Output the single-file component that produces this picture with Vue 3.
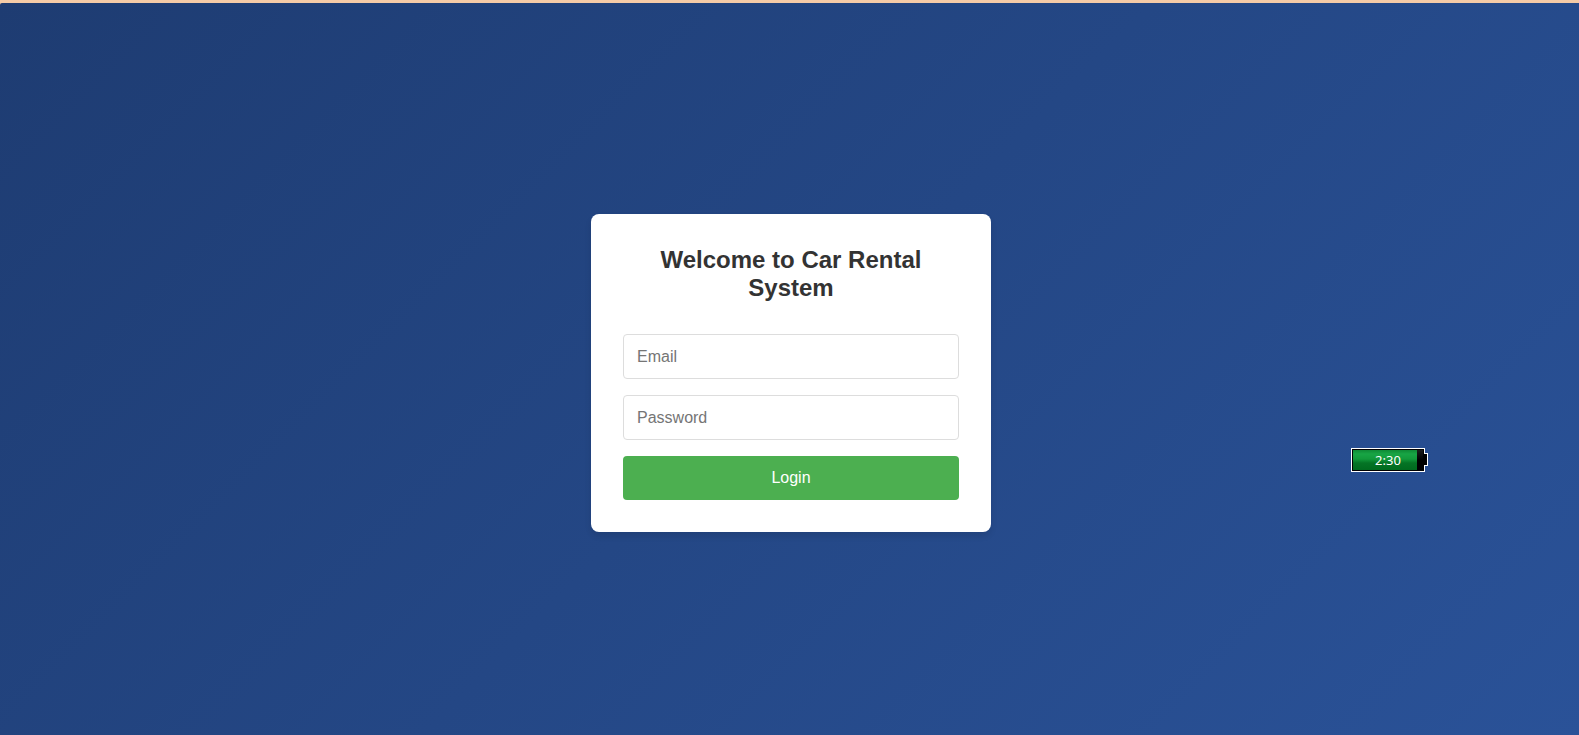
<script setup>
import { ref } from 'vue'

const email = ref('')
const password = ref('')
const remaining = '2:30'
</script>

<template>
  <div class="page">
    <div class="strip"></div>
    <main class="backdrop">
      <form class="card" @submit.prevent>
        <h1 class="title">Welcome to Car Rental System</h1>
        <input v-model="email" class="field" type="email" placeholder="Email" aria-label="Email" />
        <input v-model="password" class="field" type="password" placeholder="Password" aria-label="Password" />
        <button class="login" type="submit">Login</button>
      </form>
    </main>
    <div class="battery">
      <svg class="shell" width="77" height="24" viewBox="0 0 77 24" shape-rendering="crispEdges" aria-hidden="true">
        <defs>
          <linearGradient id="charge" x1="0" y1="0" x2="0" y2="1">
            <stop offset="0" stop-color="#0f8a35" />
            <stop offset="0.2" stop-color="#18a545" />
            <stop offset="0.45" stop-color="#129a3b" />
            <stop offset="0.65" stop-color="#047425" />
            <stop offset="1" stop-color="#006a1e" />
          </linearGradient>
          <linearGradient id="empty" x1="0" y1="0" x2="0" y2="1">
            <stop offset="0" stop-color="#1c1c1c" />
            <stop offset="0.5" stop-color="#000" />
          </linearGradient>
        </defs>
        <path d="M0 0H74V5H77V18H74V24H0Z" fill="#fff" />
        <path d="M1 1H73V6H76V17H73V23H1Z" fill="#000" />
        <rect x="66" y="2" width="6" height="20" fill="url(#empty)" />
        <rect x="2" y="2" width="64" height="20" fill="url(#charge)" />
      </svg>
      <span class="time">{{ remaining }}</span>
    </div>
  </div>
</template>

<style>
body {
  margin: 0;
}
</style>

<style scoped>
.page {
  position: relative;
  display: flex;
  flex-direction: column;
  min-height: 100vh;
  background: #f5cba7;
  font-family: "Liberation Sans", Arial, sans-serif;
}

.strip {
  height: 3px;
}

.backdrop {
  flex: 1;
  display: flex;
  align-items: center;
  justify-content: center;
  padding: 8px 0 0 3px;
  border-top-left-radius: 2px;
  background: linear-gradient(135deg, #1e3c72, #2a5298);
}

.card {
  box-sizing: border-box;
  display: flex;
  flex-direction: column;
  gap: 16px;
  width: 100%;
  max-width: 400px;
  padding: 32px;
  border-radius: 8px;
  background: #fff;
  box-shadow: 0 4px 6px rgba(0, 0, 0, 0.1);
}

.title {
  margin: 0 0 16px;
  color: #333;
  font-size: 24px;
  line-height: 28px;
  text-align: center;
}

.field {
  box-sizing: border-box;
  width: 100%;
  height: 45px;
  padding: 0 13px;
  border: 1px solid #ddd;
  border-radius: 4px;
  background: #fff;
  color: #333;
  font: 16px "Liberation Sans", Arial, sans-serif;
}

.field::placeholder {
  color: #757575;
  opacity: 1;
}

.login {
  height: 44px;
  padding: 0;
  border: 0;
  border-radius: 4px;
  background: #4caf50;
  color: #fff;
  font: 16px "Liberation Sans", Arial, sans-serif;
  cursor: pointer;
}

.battery {
  position: absolute;
  top: 448px;
  right: 151px;
  width: 77px;
  height: 24px;
}

.shell {
  display: block;
}

.time {
  position: absolute;
  inset: 0 3px 0 0;
  color: #fff;
  font: 13px/24px "Noto Sans", sans-serif;
  text-align: center;
}
</style>
